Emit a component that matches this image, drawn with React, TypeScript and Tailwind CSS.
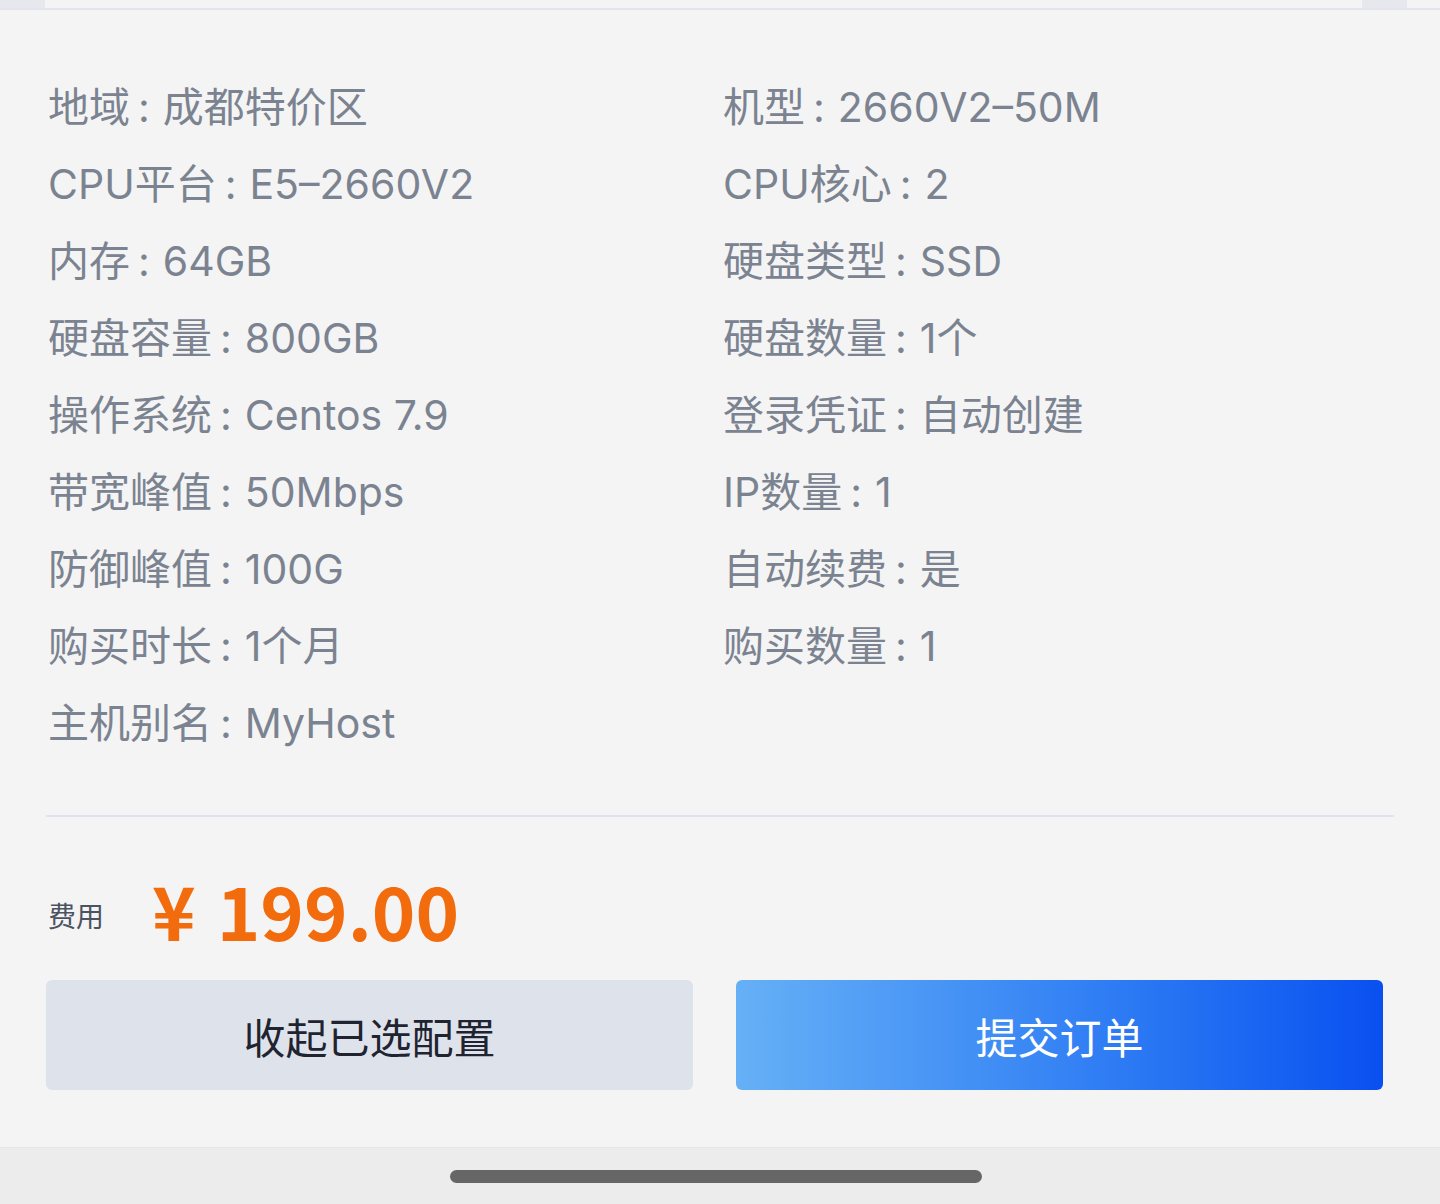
const LEFT = [
  ['地域', '成都特价区'],
  ['CPU平台', 'E5-2660V2'],
  ['内存', '64GB'],
  ['硬盘容量', '800GB'],
  ['操作系统', 'Centos 7.9'],
  ['带宽峰值', '50Mbps'],
  ['防御峰值', '100G'],
  ['购买时长', '1个月'],
  ['主机别名', 'MyHost'],
];

const RIGHT = [
  ['机型', '2660V2-50M'],
  ['CPU核心', '2'],
  ['硬盘类型', 'SSD'],
  ['硬盘数量', '1个'],
  ['登录凭证', '自动创建'],
  ['IP数量', '1'],
  ['自动续费', '是'],
  ['购买数量', '1'],
];

function Row({ label, value }: { label: string; value: string }) {
  return (
    <div className="h-[77px] flex items-center text-[41px] text-[#7b8391] whitespace-nowrap">
      <span>{label}</span>
      <span className="ml-[8px] mr-[13px]">:</span>
      <span>{value.replace('-', '–')}</span>
    </div>
  );
}

export default function App() {
  return (
    <div
      className="w-[1440px] h-[1204px] bg-[#f4f4f4] flex flex-col overflow-hidden"
      style={{ fontFamily: 'Inter, "Noto Sans CJK SC", sans-serif' }}
    >
      {/* Tail of the previous panel */}
      <div className="h-[10px] flex border-b-2 border-[#e2e5ec]">
        <div className="w-[45px] bg-[#e6e8ee]" />
        <div className="flex-1" />
        <div className="w-[45px] bg-[#e6e8ee]" />
        <div className="w-[33px]" />
      </div>

      {/* Selected configuration */}
      <div className="pt-[59px] px-[48px] grid grid-cols-[675px_1fr]">
        <div className="flex flex-col">
          {LEFT.map(([l, v]) => (
            <Row key={l} label={l} value={v} />
          ))}
        </div>
        <div className="flex flex-col">
          {RIGHT.map(([l, v]) => (
            <Row key={l} label={l} value={v} />
          ))}
        </div>
      </div>

      <div className="mt-[53px] mx-[46px] h-[2px] bg-[#dfe2ea]" />

      {/* Price */}
      <div className="mt-[58px] px-[48px] h-[80px] flex items-center">
        <span
          className="text-[28px] text-[#4b5363] mr-[48px]"
          style={{ fontFamily: '"Noto Sans CJK SC", sans-serif' }}
        >
          费用
        </span>
        <span
          className="text-[74px] font-bold text-[#f26b0c] leading-none flex items-center -mt-[12px]"
          style={{ fontFamily: '"Noto Sans CJK SC", sans-serif' }}
        >
          <span className="mr-[21px]">¥</span>
          <span>199.00</span>
        </span>
      </div>

      {/* Actions */}
      <div
        className="mt-[25px] pl-[46px] pr-[57px] flex gap-[43px]"
        style={{ fontFamily: '"Noto Sans CJK SC", sans-serif' }}
      >
        <button className="w-[647px] h-[110px] rounded-[6px] bg-[#dee2eb] text-[42px] text-[#1f2430]">
          收起已选配置
        </button>
        <button className="w-[647px] h-[110px] rounded-[6px] bg-gradient-to-r from-[#66b0f6] to-[#0a4ff0] text-[42px] text-white">
          提交订单
        </button>
      </div>

      <div className="flex-1" />

      {/* Home indicator */}
      <div className="h-[57px] bg-[#ececec] border-t border-[#e6e6e6] flex justify-center pt-[22px]">
        <div className="w-[532px] h-[13px] mr-[8px] rounded-full bg-[#666666]" />
      </div>
    </div>
  );
}
